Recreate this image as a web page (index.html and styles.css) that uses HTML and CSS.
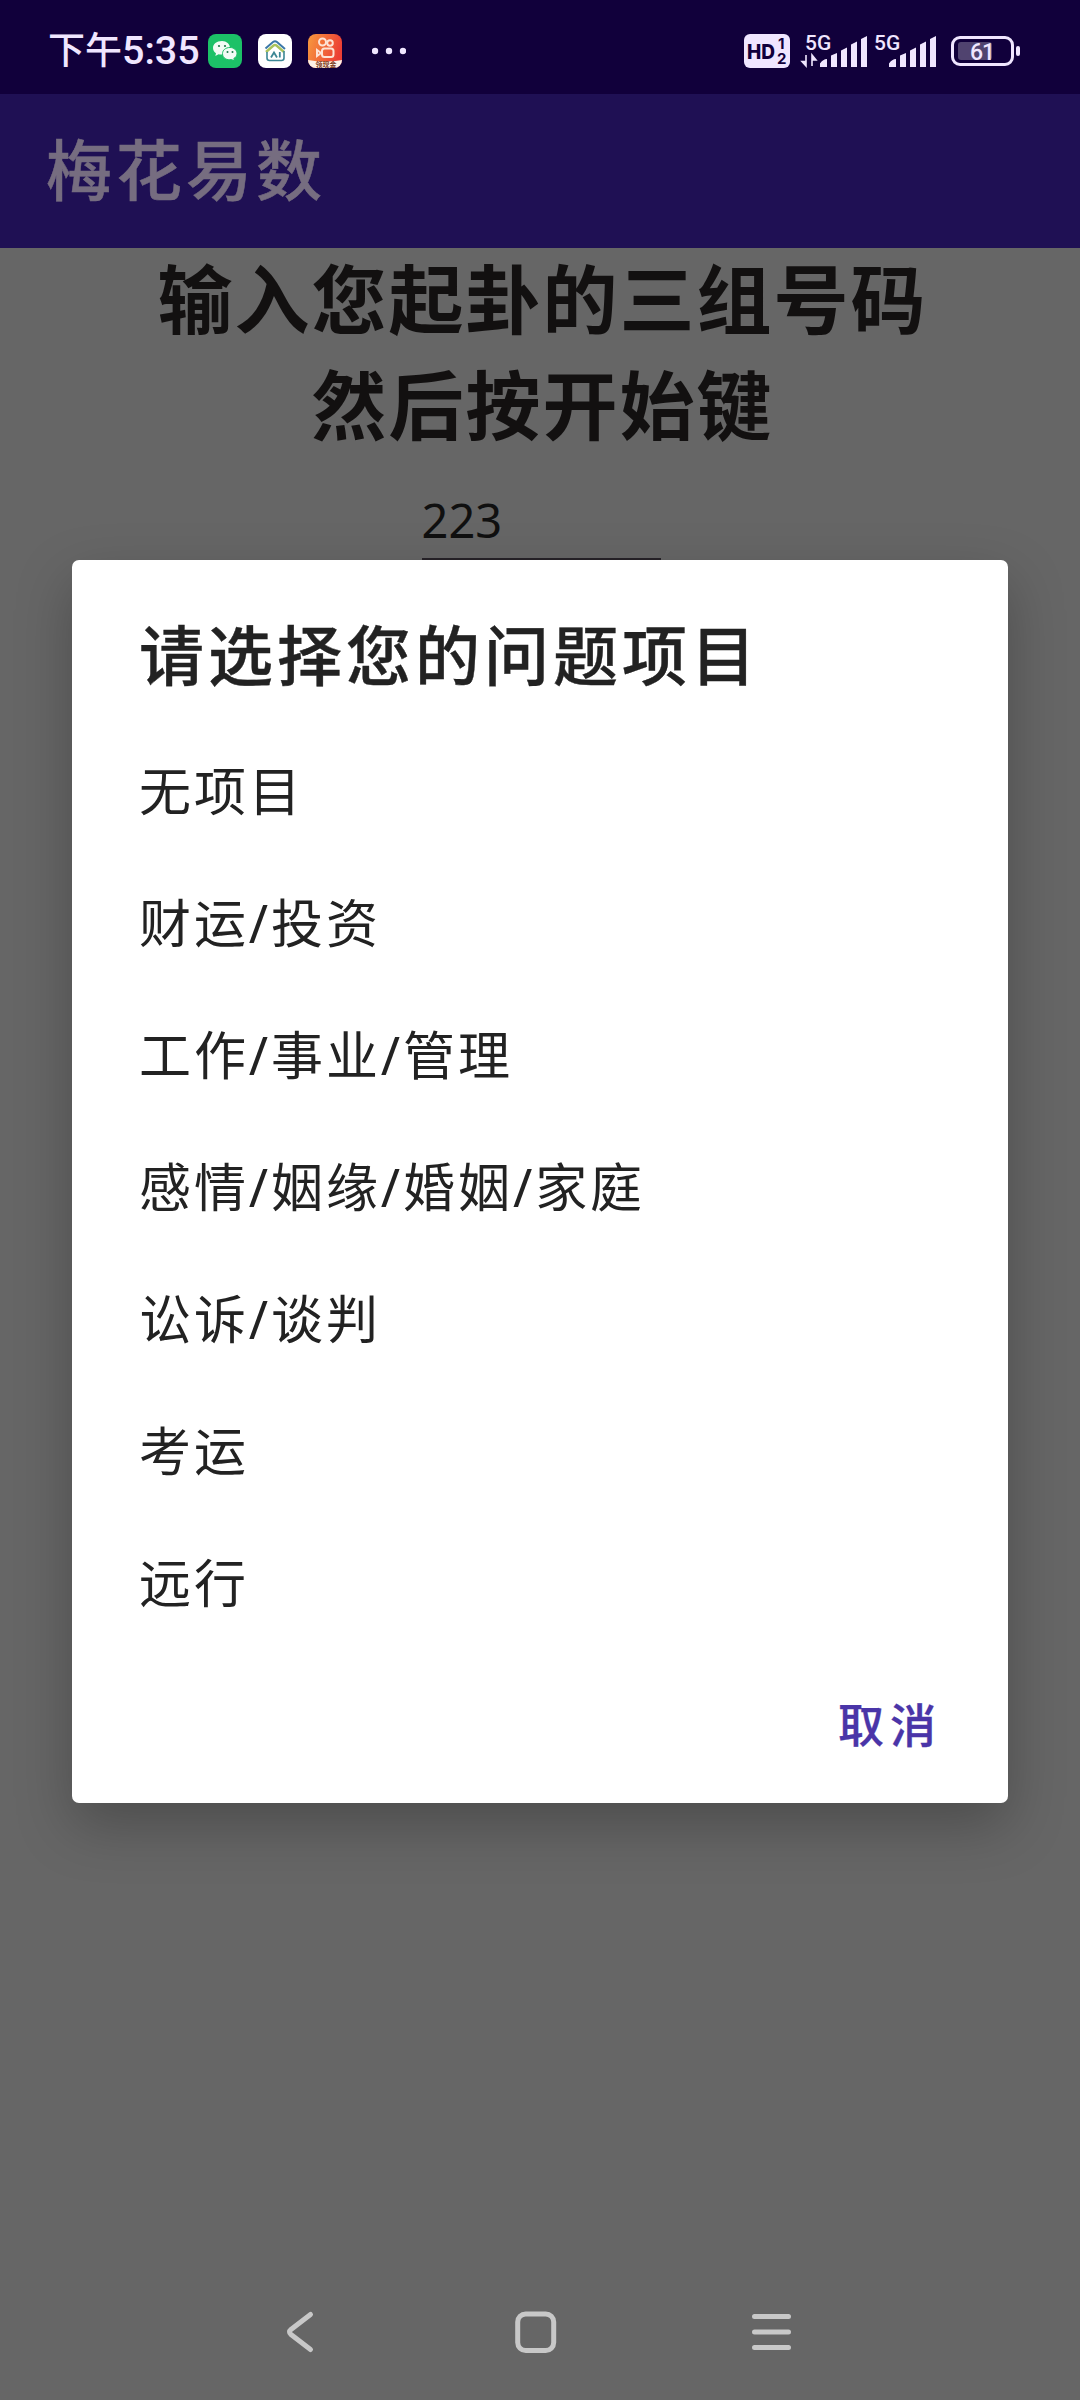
FILE: index.html
```html
<!DOCTYPE html>
<html lang="zh-CN">
<head>
    <meta charset="UTF-8">
    <title>梅花易数</title>
    <link rel="stylesheet" href="styles.css">
</head>
<body>
    <div class="pantalla">
        <header class="status-bar">
            <div class="hora"><span class="hora-texto">下午</span>5:35</div>
            <div class="apps">
                <svg class="app-icon" viewBox="0 0 34 34">
                    <rect width="34" height="34" rx="8" fill="#1cc167"/>
                    <path d="M14 7C8.500 7 5 10 5 14c0 2.300 1.200 4 3 5.200L7.300 22l3.200-1.700c5.500 1.200 11.500-1.500 11.500-6.300 0-4-3.500-7-8-7z" fill="#f2fbf5"/>
                    <path d="M22 13.500c-4.500 0-7.500 2.700-7.500 6.200 0 4.300 4.500 6.900 9 5.800l3 1.500-.7-2.500c2-1.200 3.200-2.800 3.200-4.800 0-3.500-3-6.200-7-6.200z" fill="#f2fbf5" stroke="#1cc167" stroke-width="1"/>
                    <g fill="#1c7a4a"><circle cx="11" cy="12" r="1.100"/><circle cx="17" cy="12" r="1.100"/><circle cx="19.500" cy="18" r="1"/><circle cx="24.500" cy="18" r="1"/></g>
                </svg>
                <svg class="app-icon" viewBox="0 0 34 34">
                    <rect width="34" height="34" rx="8" fill="#fff"/>
                    <path d="M7.500 14.500L15 8q2-1.500 4 0l8 7" fill="none" stroke="#3b78a8" stroke-width="2"/>
                    <path d="M8 18l7.500-6.500q1.500-1 3 0L26 18" fill="none" stroke="#a9c25c" stroke-width="2.400"/>
                    <path d="M9 18v6q0 2.500 2.500 2.500h12q2.500 0 2.500-2.500v-7" fill="none" stroke="#3c8795" stroke-width="1.600"/>
                    <path d="M13 23.500l3-5 3 5M21.800 18v5.500" fill="none" stroke="#3c8795" stroke-width="1.800"/>
                </svg>
                <svg class="app-icon" viewBox="0 0 34 34">
                    <defs>
                        <linearGradient id="naranja" x1="0" y1="0" x2="1" y2="0.300">
                            <stop offset="0" stop-color="#f79a3e"/>
                            <stop offset="1" stop-color="#ec3f35"/>
                        </linearGradient>
                        <clipPath id="marco"><rect width="34" height="34" rx="8"/></clipPath>
                    </defs>
                    <g clip-path="url(#marco)">
                        <rect width="34" height="34" fill="url(#naranja)"/>
                        <g fill="none" stroke="#fde3d6" stroke-width="2">
                            <circle cx="14.500" cy="8" r="3.500"/>
                            <circle cx="22" cy="9" r="2.800"/>
                            <rect x="14" y="14.500" width="11.500" height="8.500" rx="2.500"/>
                            <path d="M9 16v6l4-3z"/>
                        </g>
                        <path d="M0 26q17 3 34 0v8H0z" fill="#fdf0e6"/>
                        <text class="mini" x="7.500" y="33">领现金</text>
                    </g>
                </svg>
            </div>
            <svg class="puntos" viewBox="0 0 34 34" fill="#f0e6ff">
                <circle cx="3" cy="17" r="3.200"/><circle cx="17" cy="17" r="3.200"/><circle cx="31" cy="17" r="3.200"/>
            </svg>
            <svg class="hd" viewBox="0 0 46 34">
                <rect width="46" height="34" rx="6" fill="#f0e6ff"/>
                <text class="hd-texto" x="3" y="24.500" textLength="28" lengthAdjust="spacingAndGlyphs">HD</text>
                <text class="hd-num" x="34" y="15">1</text>
                <text class="hd-num" x="33" y="30">2</text>
            </svg>
            <svg class="signal" viewBox="0 0 68 34">
                <text class="red" x="4" y="15.500">5G</text>
                <path d="M5 21v11l-4-4.500h4M11 32V21l4 5h-4" fill="#f0e6ff" stroke="#f0e6ff" stroke-width="1.600"/>
                <path d="M19 33v-3.500q3-4.500 7-4.500v8zM30 33V21.500l6-2.500v14zM40 33V16.500l6-3v19.500zM50 33V10.500l6-3v25.500zM60 33V5l6-3v31z" fill="#f0e6ff"/>
            </svg>
            <svg class="signal" viewBox="0 0 68 34">
                <text class="red" x="4" y="15.500">5G</text>
                <path d="M19 33v-3.500q3-4.500 7-4.500v8zM30 33V21.500l6-2.500v14zM40 33V16.500l6-3v19.500zM50 33V10.500l6-3v25.500zM60 33V5l6-3v31z" fill="#f0e6ff"/>
            </svg>
            <svg class="bateria" viewBox="0 0 70 34">
                <rect x="1.500" y="3.500" width="60" height="27" rx="7.500" fill="none" stroke="#f0e6ff" stroke-width="3"/>
                <rect x="7" y="8" width="34" height="18" rx="3" fill="#50436f"/>
                <rect x="65" y="12" width="4" height="10" rx="2" fill="#f0e6ff"/>
                <text class="bateria-num" x="31" y="26">61</text>
            </svg>
        </header>

        <div class="app-bar">梅花易数</div>

        <main class="contenido">
            <h1 class="titulo">输入您起卦的三组号码<br>然后按开始键</h1>
            <div class="numero">223</div>

            <div class="dialogo">
                <h2 class="dialogo-titulo">请选择您的问题项目</h2>
                <ul class="opciones">
                    <li>无项目</li>
                    <li>财运/投资</li>
                    <li>工作/事业/管理</li>
                    <li>感情/姻缘/婚姻/家庭</li>
                    <li>讼诉/谈判</li>
                    <li>考运</li>
                    <li>远行</li>
                </ul>
                <button class="cancelar" type="button">取消</button>
            </div>
        </main>

        <nav class="nav-bar">
            <svg class="nav-icon" viewBox="0 0 48 48">
                <path d="M32.500 6.500L13 21.500q-3 2.500 0 5L32.500 41.500"/>
            </svg>
            <svg class="nav-icon" viewBox="0 0 48 48">
                <rect x="6.700" y="6" width="36" height="36.500" rx="8"/>
            </svg>
            <svg class="nav-icon" viewBox="0 0 48 48">
                <path d="M10.500 8.500h34M10.500 24h34M10.500 39.500h34"/>
            </svg>
        </nav>
    </div>
</body>
</html>
```
FILE: styles.css
```css
* {
    box-sizing: border-box;
    margin: 0;
    padding: 0;
}

body {
    font-family: "Noto Sans", "Noto Sans CJK SC", sans-serif;
    background-color: #666666;
}

.pantalla {
    width: 1080px;
    height: 2400px;
    display: flex;
    flex-direction: column;
    overflow: hidden;
}

.status-bar {
    height: 94px;
    flex: none;
    background-color: #11003b;
    display: flex;
    align-items: center;
    padding: 8px 59px 0 48px;
}

.hora {
    width: 160px;
    font-family: Roboto, "Noto Sans CJK SC", sans-serif;
    font-size: 39.500px;
    font-weight: 500;
    line-height: 50px;
    color: #f0e6ff;
    white-space: nowrap;
}

.hora-texto {
    font-size: 37px;
}

.apps {
    display: flex;
    gap: 16px;
}

.app-icon {
    width: 34px;
    height: 34px;
}

.mini {
    font-family: "Noto Sans CJK SC", sans-serif;
    font-size: 7px;
    font-weight: bold;
    fill: #7c3a20;
}

.puntos {
    width: 34px;
    height: 34px;
    margin-left: 30px;
}

.hd {
    width: 46px;
    height: 34px;
    margin-left: auto;
}

.hd-texto {
    font-family: Inter, sans-serif;
    font-size: 20px;
    font-weight: 800;
    fill: #11003b;
}

.hd-num {
    font-family: Inter, sans-serif;
    font-size: 15px;
    font-weight: 700;
    fill: #11003b;
}

.signal {
    width: 68px;
    height: 34px;
    margin-left: 11px;
    overflow: visible;
}

.signal + .signal {
    margin-left: 1px;
}

.red {
    font-family: Roboto, sans-serif;
    font-size: 21px;
    font-weight: 500;
    fill: #f0e6ff;
}

.bateria {
    width: 70px;
    height: 34px;
    margin-left: 13px;
}

.bateria-num {
    font-family: Roboto, sans-serif;
    font-size: 23px;
    font-weight: 500;
    letter-spacing: -1px;
    text-anchor: middle;
    fill: #f0e6ff;
}

.app-bar {
    height: 154px;
    flex: none;
    padding-left: 46px;
    background-color: #1f1054;
    color: #766d80;
    font-size: 66px;
    font-weight: 500;
    line-height: 150px;
    letter-spacing: 4px;
    -webkit-text-stroke: 0.5px #766d80;
}

.contenido {
    flex: 1;
    display: flex;
    flex-direction: column;
    align-items: center;
}

.titulo {
    margin-top: -2px;
    padding-left: 5px;
    font-size: 75px;
    font-weight: 700;
    line-height: 106px;
    letter-spacing: 2px;
    text-align: center;
    color: #121010;
}

.numero {
    width: 239px;
    height: 102px;
    padding-top: 30px;
    margin-left: 2px;
    border-bottom: 2px solid #262228;
    font-size: 47px;
    line-height: 64px;
    color: #101010;
}

.dialogo {
    position: relative;
    width: 936px;
    height: 1243px;
    display: flex;
    flex-direction: column;
    padding: 47px 66px 0 67px;
    border-radius: 7px;
    background-color: #ffffff;
    box-shadow: 0 22px 56px rgba(0, 0, 0, 0.25);
}

.dialogo-titulo {
    font-size: 65px;
    font-weight: 500;
    line-height: 97px;
    letter-spacing: 4px;
    color: #222222;
    -webkit-text-stroke: 0.4px #222222;
}

.opciones {
    padding-top: 21px;
    list-style: none;
    font-size: 52px;
    line-height: 132px;
    letter-spacing: 2.900px;
    color: #222222;
}

.cancelar {
    align-self: flex-end;
    margin-top: 35px;
    border: none;
    background: none;
    font-family: inherit;
    font-size: 46px;
    font-weight: 500;
    line-height: 80px;
    letter-spacing: 6px;
    color: #4a35a8;
    -webkit-text-stroke: 0.3px #4a35a8;
}

.nav-bar {
    height: 136px;
    flex: none;
    display: flex;
    justify-content: center;
    gap: 185px;
    padding: 44px 10px 0 0;
}

.nav-icon {
    width: 48px;
    height: 48px;
    fill: none;
    stroke: #c8c8c8;
    stroke-width: 5;
    stroke-linecap: round;
}
```
